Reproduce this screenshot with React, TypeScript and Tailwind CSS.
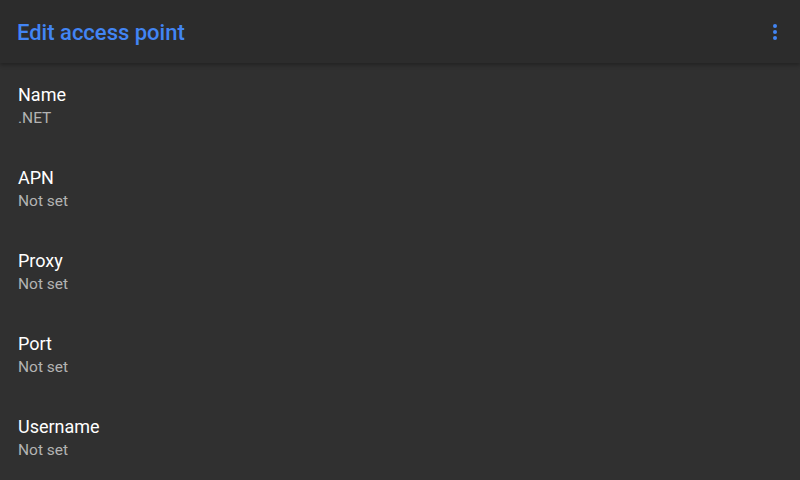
const rows = [
  { title: 'Name', value: '.NET' },
  { title: 'APN', value: 'Not set' },
  { title: 'Proxy', value: 'Not set' },
  { title: 'Port', value: 'Not set' },
  { title: 'Username', value: 'Not set' },
]

export default function App() {
  return (
    <div className="flex h-[480px] w-[800px] flex-col overflow-hidden bg-[#303030] font-['Roboto',sans-serif]">
      <div className="relative z-10 flex h-[63px] shrink-0 items-center justify-between bg-[#2c2c2c] pl-[17px] pr-[22px] shadow-[0_2px_4px_rgba(0,0,0,0.3)]">
        <span className="pt-[2px] text-[22px] font-medium text-[#4285f4]">Edit access point</span>
        <svg width="6" height="18" viewBox="0 0 6 18">
          <circle cx="3" cy="3" r="2" fill="#4285f4" />
          <circle cx="3" cy="9" r="2" fill="#4285f4" />
          <circle cx="3" cy="15" r="2" fill="#4285f4" />
        </svg>
      </div>
      <div className="flex flex-col">
        {rows.map((r) => (
          <div key={r.title} className="flex h-[83px] flex-col pl-[18px] pt-[19px]">
            <span className="text-[18px] leading-[26px] text-white">{r.title}</span>
            <span className="text-[15.5px] leading-[21px] text-[#b3b3b3]">{r.value}</span>
          </div>
        ))}
      </div>
    </div>
  )
}
